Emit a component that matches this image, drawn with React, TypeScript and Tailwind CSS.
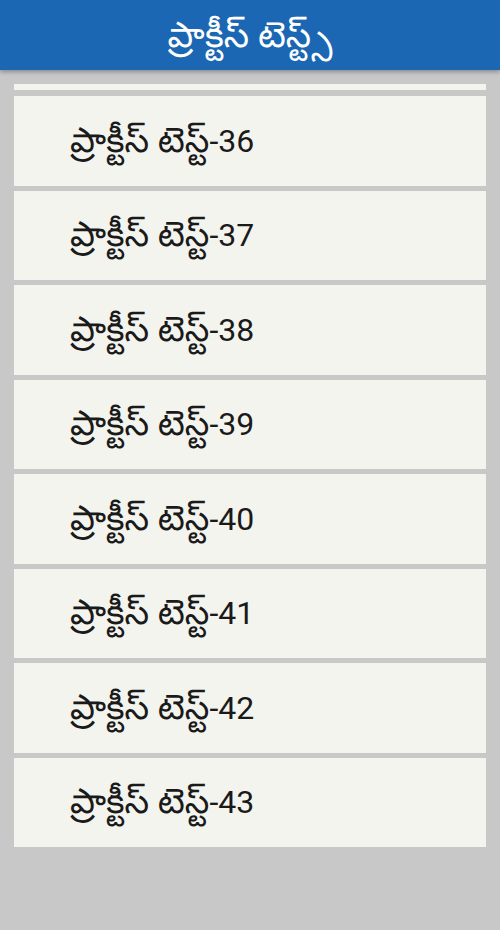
import React from 'react';

const tests = [36, 37, 38, 39, 40, 41, 42, 43];

const App = () => {
  return (
    <div
      className="w-[500px] h-[930px] overflow-hidden bg-[#c8c8c8] flex flex-col"
      style={{ fontFamily: 'Roboto, "Noto Sans Telugu", "Noto Sans", sans-serif' }}
    >
      {/* Header */}
      <div className="h-[70px] shrink-0 bg-[#1b67b3] flex items-center justify-center text-white text-[36px] shadow-[0_2px_4px_rgba(0,0,0,0.3)] relative z-10">
        ప్రాక్టీస్ టెస్ట్స్
      </div>

      <div className="flex flex-col gap-[5px] px-[14px] pt-[14px]">
        {/* partially scrolled card */}
        <div className="h-[6px] mb-[1px] bg-[#f4f4ef]" />
        {tests.map((n) => (
          <div key={n} className="h-[89.5px] bg-[#f4f4ef] flex items-center pl-[56px] text-[32px] text-[#1a1a1a]">
            <span className="text-[35px]">ప్రాక్టీస్ టెస్ట్</span>-{n}
          </div>
        ))}
      </div>
    </div>
  );
};

export default App;
